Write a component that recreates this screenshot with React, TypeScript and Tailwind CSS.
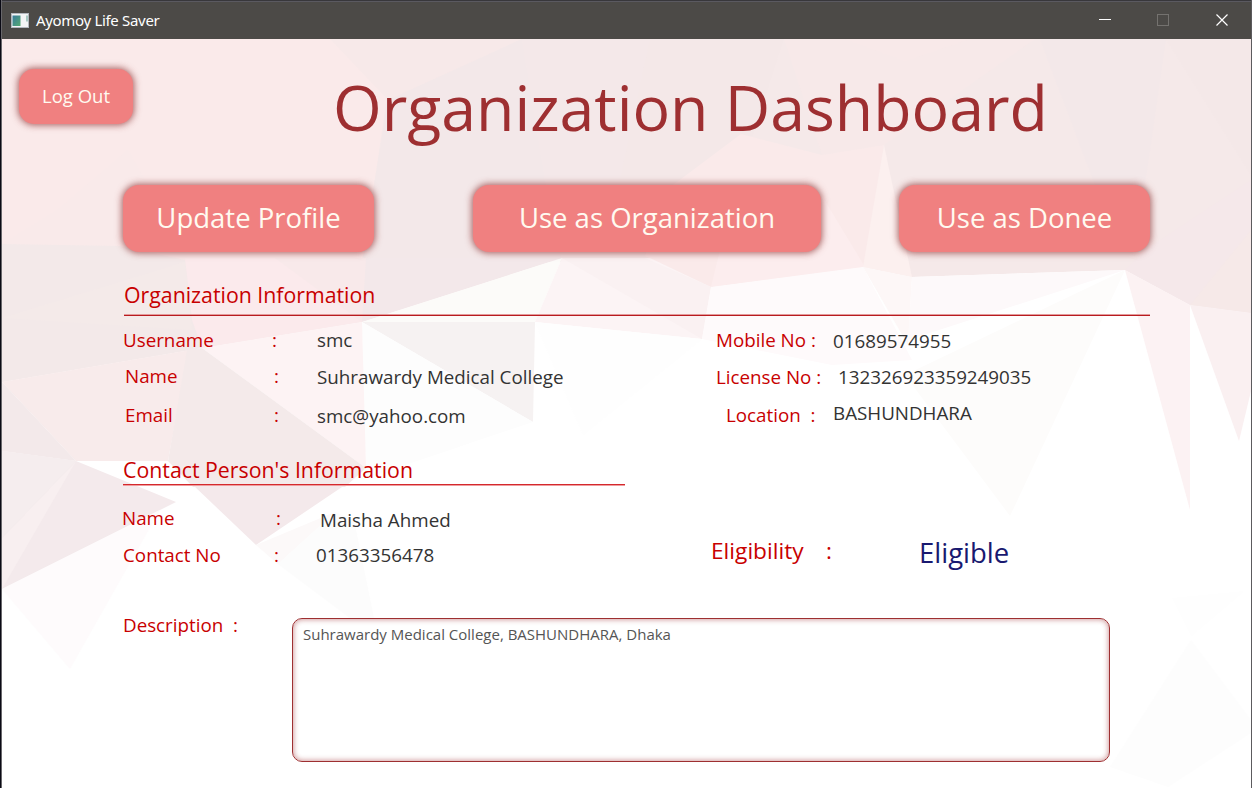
import React from "react";

const facets: [string, string][] = [
  ["2,39 1251,39 1251,313 1190,305 1125,270 912,277 863,267 711,287 562,258 362,322 202,348 2,382", "#f5e9e9"],
  ["2,39 360,39 388,90 374,185 362,262 185,262 120,246 2,244", "#faeaea"],
  ["2,244 60,208 128,150 190,262 100,262", "#f9eaea"],
  ["330,39 522,39 388,100", "#f7e9e9"],
  ["388,100 522,39 545,180 562,262 362,262 374,185", "#f3e8e9"],
  ["522,39 650,39 620,180 545,180", "#f4e8e9"],
  ["650,39 784,39 748,150 690,180 620,180", "#f4e8e8"],
  ["784,39 1035,39 884,145 822,155", "#f7e9e9"],
  ["845,39 970,39 905,61", "#f8e9e9"],
  ["1040,39 1166,39 1145,185 1095,185", "#f3e8e9"],
  ["1166,39 1251,39 1251,175", "#f4e8e8"],
  ["673,185 741,134 822,155 884,145 865,262 863,267 711,287 645,256", "#faeaea"],
  ["822,196 865,267 711,287 720,250 822,250", "#fcedee"],
  ["884,145 912,277 863,267", "#fcf0ef"],
  ["1251,180 1251,313 1190,305 1125,270 1145,250", "#f5e8ea"],
  ["1251,230 1251,313 1190,305", "#f6e9e8"],
  ["2,244 120,246 185,260 192,300 202,348 2,382", "#f3e9e9"],
  ["2,318 185,262 190,300 192,330", "#f4eae9"],
  ["185,258 366,258 362,322 202,348 192,320", "#fbeaec"],
  ["275,258 366,258 362,322", "#f8e9ea"],
  ["366,258 562,258 362,322", "#f3e8ea"],
  ["562,258 362,322 535,322", "#fcfbf9"],
  ["362,322 535,322 533,422", "#f6f2f2"],
  ["362,322 533,422 366,478", "#fdfdfd"],
  ["202,348 362,322 366,468", "#fdf3f4"],
  ["2,382 202,348 188,352 168,461 76,461", "#f8ebeb"],
  ["202,348 366,468 345,487 193,487 168,461 187,350", "#f4eaea"],
  ["2,382 76,461 2,451", "#f3e9ea"],
  ["193,485 345,485 256,545", "#f4e9eb"],
  ["2,451 76,461 176,502 2,589", "#f4eaec"],
  ["2,538 76,461 2,589", "#f8eff0"],
  ["2,451 76,461 2,538", "#f5edee"],
  ["2,589 160,510 70,669", "#fefbfc"],
  ["256,545 335,512 278,564", "#fcf9f9"],
  ["278,564 335,512 354,520 374,618 350,618", "#fcfcfc"],
  ["562,258 535,322 702,339 711,287 650,258", "#fcf4f5"],
  ["562,258 645,258 711,287 702,339", "#faf1f2"],
  ["535,322 702,339 583,435", "#fefefe"],
  ["711,287 863,267 912,360 832,365 702,339", "#fefafb"],
  ["863,267 912,277 908,345", "#fdf7f7"],
  ["912,277 1125,270 908,340", "#fdf9fa"],
  ["905,375 1125,270 1010,516", "#fdfcfb"],
  ["1125,270 1190,305 1190,510", "#fcf2f3"],
  ["1190,305 1251,313 1251,391 1239,441", "#faf0f1"],
  ["1172,598 1244,591 1191,636", "#fefefe"],
  ["1191,640 1251,720 1251,733 1168,787 1110,767", "#fdfdfd"],
];

function Backdrop() {
  return (
    <svg className="absolute left-0 top-0 -z-10" width="1252" height="788" viewBox="0 0 1252 788">
      {facets.map(([points, fill], i) => (
        <polygon key={i} points={points} fill={fill} />
      ))}
    </svg>
  );
}

function TitleBar() {
  return (
    <header className="flex h-[39px] items-center border-t border-[#38373b] bg-[#4c4a47] pl-[11px] shadow-[inset_0_1px_0_#5a5960]">
      <svg width="18" height="15" viewBox="0 0 18 15" className="mr-[7px]">
        <defs>
          <linearGradient id="pane" x1="0" y1="0" x2="1" y2="1">
            <stop offset="0" stopColor="#397b9c" />
            <stop offset="1" stopColor="#55aa72" />
          </linearGradient>
        </defs>
        <rect width="18" height="15" fill="#b3b8bf" />
        <rect x="1" y="1" width="16" height="13" fill="#f4f5f6" />
        <rect x="1.5" y="2.5" width="8" height="10.5" fill="url(#pane)" />
        <rect x="15.5" y="2.5" width="1" height="6" fill="#5fa092" />
      </svg>
      <span className="grow text-[15px] leading-5 tracking-[-0.32px] text-white font-['Noto_Sans','Open_Sans',sans-serif]">Ayomoy Life Saver</span>
      <svg width="153" height="38" viewBox="0 0 153 38" fill="none" shapeRendering="crispEdges">
        <path d="M1 18.5h12" stroke="#fff" />
        <rect x="59.5" y="13.5" width="11" height="11" stroke="#74726f" />
        <path d="M118.5 13.5l11 11M129.5 13.5l-11 11" stroke="#fff" strokeWidth="1.2" shapeRendering="auto" />
      </svg>
    </header>
  );
}

function ActionButton({ label, className }: { label: string; className: string }) {
  return (
    <button className={`shrink-0 whitespace-nowrap bg-[#f08080] text-[#fffaf0] shadow-[0_0_7px_1px_rgba(139,45,45,0.75)] ${className}`}>
      {label}
    </button>
  );
}

function Cell({ text, className }: { text: string; className: string }) {
  return <span className={`shrink-0 whitespace-pre ${className}`}>{text}</span>;
}

export default function App() {
  return (
    <div className="relative isolate flex h-[788px] w-[1252px] flex-col overflow-hidden border-r border-[#5c5b5e] bg-white font-['Open_Sans',sans-serif] font-normal">
      <Backdrop />
      <div className="absolute left-0 top-0 h-[788px] w-[2px] border-r border-[#68676b] bg-[#0a0a14]" />
      <TitleBar />

      <div className="flex h-[144px] items-start">
        <ActionButton label="Log Out" className="ml-[19px] mt-[30px] h-[55px] w-[114px] rounded-[15px] pb-px text-[18.5px]" />
        <h1 className="ml-[200px] mt-[24px] whitespace-nowrap text-[62.6px] leading-[88px] text-[#9e2f31]">Organization Dashboard</h1>
      </div>

      <div className="flex h-[97px] items-start pl-[123px] pt-[2px] text-[27.5px]">
        <ActionButton label="Update Profile" className="h-[67px] w-[251px] rounded-[16px] pb-px" />
        <ActionButton label="Use as Organization" className="ml-[99px] h-[67px] w-[348px] rounded-[16px] pb-px" />
        <ActionButton label="Use as Donee" className="ml-[78px] h-[67px] w-[251px] rounded-[16px] pb-px" />
      </div>

      <section className="flex h-[175px] flex-col pl-[124px] text-[18.8px] leading-7 text-[#c80000]">
        <h2 className="h-[34px] text-[21.3px] leading-[30px]">Organization Information</h2>
        <div className="h-[2px] w-[1026px] border-t border-b border-t-[#e39a9b] border-b-[#b81b1f]" />
        <div className="flex h-[38px] pt-[10px]">
          <Cell text="Username" className="-ml-px w-[149px]" />
          <Cell text=":" className="w-[45px]" />
          <Cell text="smc" className="w-[399px] text-[#333]" />
          <Cell text="Mobile No :" className="w-[117px]" />
          <Cell text="01689574955" className="pt-px text-[#333]" />
        </div>
        <div className="flex h-[38px] pt-[8px]">
          <Cell text="Name" className="w-[150px] pl-px" />
          <Cell text=":" className="w-[43px]" />
          <Cell text="Suhrawardy Medical College" className="w-[399px] pt-px text-[#333]" />
          <Cell text="License No :" className="w-[122px] pt-px" />
          <Cell text="132326923359249035" className="pt-px text-[#333]" />
        </div>
        <div className="flex h-[38px] pt-[9px]">
          <Cell text="Email" className="w-[150px] pl-px" />
          <Cell text=":" className="w-[43px]" />
          <Cell text="smc@yahoo.com" className="w-[409px] pt-px text-[#333]" />
          <Cell text="Location  :" className="w-[107px]" />
          <Cell text="BASHUNDHARA" className="-mt-[2px] text-[#333]" />
        </div>
      </section>

      <section className="flex h-[149px] pl-[123px] text-[18.8px] leading-7 text-[#c80000]">
        <div className="w-[588px]">
          <h2 className="h-[29px] text-[21.3px] leading-[30px]">Contact Person's Information</h2>
          <div className="h-[2px] w-[502px] border-t border-b border-t-[#d4292d] border-b-[#ef9c9e]" />
          <div className="flex h-[37px] pt-[18px]">
            <Cell text="Name" className="-ml-px w-[154px]" />
            <Cell text=":" className="w-[44px]" />
            <Cell text="Maisha Ahmed" className="pt-[2px] text-[#333]" />
          </div>
          <div className="flex h-[37px] pt-[18px]">
            <Cell text="Contact No" className="w-[151px]" />
            <Cell text=":" className="w-[42px]" />
            <Cell text="01363356478" className="text-[#333]" />
          </div>
        </div>
        <div className="flex pt-[80px] text-[22.7px] leading-8">
          <Cell text="Eligibility" className="w-[115px]" />
          <Cell text=":" className="w-[93px]" />
          <Cell text="Eligible" className="pt-[2px] text-[27.5px] text-[#191970]" />
        </div>
      </section>

      <section className="flex h-[184px] pl-[123px] pt-[7px] text-[18.8px] leading-7 text-[#c80000]">
        <Cell text="Description  :" className="w-[169px]" />
        <div className="mt-[7px] h-[144px] w-[818px] rounded-[10px] border border-[#9e2f31] bg-white px-[10px] pt-[5px] text-[15px] leading-5 text-[#555] shadow-[inset_0_0_5px_1px_rgba(158,47,49,0.45)]">
          Suhrawardy Medical College, BASHUNDHARA, Dhaka
        </div>
      </section>
    </div>
  );
}
